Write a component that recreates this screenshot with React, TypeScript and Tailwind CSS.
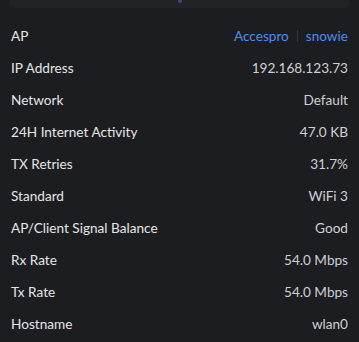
const rows: { label: string; value: string }[] = [
  { label: "IP Address", value: "192.168.123.73" },
  { label: "Network", value: "Default" },
  { label: "24H Internet Activity", value: "47.0 KB" },
  { label: "TX Retries", value: "31.7%" },
  { label: "Standard", value: "WiFi 3" },
  { label: "AP/Client Signal Balance", value: "Good" },
  { label: "Rx Rate", value: "54.0 Mbps" },
  { label: "Tx Rate", value: "54.0 Mbps" },
  { label: "Hostname", value: "wlan0" },
];

function App() {
  return (
    <div className="w-[359px] h-[342px] overflow-hidden bg-[#1c1d21] font-['Lato','Liberation_Sans',sans-serif] text-[13.6px]">
      <div className="mx-[10px] h-[8px] rounded-b-[4px] bg-[#222327] flex justify-center">
        <span className="w-[4px] h-[3px] bg-[#3b4a6b] rounded-b-sm" />
      </div>
      <div className="flex flex-col pt-[12px] px-[11px]">
        <div className="h-[32px] flex items-center justify-between">
          <span className="text-[#e4e5e7]">AP</span>
          <span className="flex items-center text-[#4c8cf0]">
            <span>Accespro</span>
            <span className="mx-[8px] w-px h-[12px] bg-[#34363b]" />
            <span>snowie</span>
          </span>
        </div>
        {rows.map((r) => (
          <div key={r.label} className="h-[32px] flex items-center justify-between">
            <span className="text-[#e4e5e7]">{r.label}</span>
            <span className="text-[#cfd0d3]">{r.value}</span>
          </div>
        ))}
      </div>
    </div>
  );
}

export default App;
